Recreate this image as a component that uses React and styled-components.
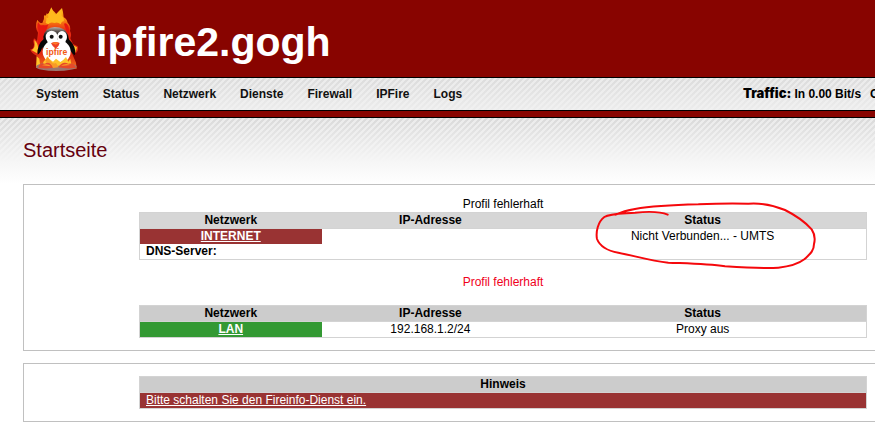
import styled, { createGlobalStyle } from "styled-components"

const GlobalStyle = createGlobalStyle`
    body { margin: 0; background: #fff; color: #000; font-family: "Liberation Sans", Arial, sans-serif; font-size: 12px; line-height: 15px; }
`

const Page = styled.div`overflow: hidden;`
const Header = styled.header`display: flex; align-items: flex-start; gap: 10px; height: 73px; padding: 4px 20px 0; background: #880400;`
const HostName = styled.h1`margin: 13px 0 0; color: #fff; font-size: 41px; line-height: 50px; font-weight: bold;`
const NavBar = styled.div`
    display: flex; align-items: center; justify-content: space-between;
    min-width: 960px; height: 32px; padding: 0 10px 0 36px;
    border-top: 1px solid #000; border-bottom: 1px solid #000;
    background:
        linear-gradient(to bottom, rgba(242,242,242,0), rgba(242,242,242,.75)),
        linear-gradient(135deg, #dcdcdc 25%, #ebebeb 25%, #ebebeb 50%, #dcdcdc 50%, #dcdcdc 75%, #ebebeb 75%) 0 0 / 6px 6px;
`
const Menu = styled.nav`display: flex; gap: 24px;`
const MenuLink = styled.a`color: #111; font-weight: bold; text-decoration: none;`
const Traffic = styled.div`display: flex; align-items: baseline; flex: none; width: 253px; font-weight: bold; white-space: nowrap;`
const TrafficLabel = styled.span`margin-right: 3px; font-family: Inter, sans-serif; font-size: 13px; font-weight: 900;`
const TrafficValue = styled.span`margin-right: 9px;`
const RedBar = styled.div`height: 6px; background: #880400; border-bottom: 1px solid #000;`

const Content = styled.main`
    min-width: 960px; padding: 0 23px;
    background:
        linear-gradient(to bottom, rgba(246,246,246,0), #f6f6f6 44px, #fff 66px),
        linear-gradient(135deg, #dadada 25%, #ebebeb 25%, #ebebeb 50%, #dadada 50%, #dadada 75%, #ebebeb 75%) 0 0 / 6px 6px;
`
const PageTitle = styled.h2`margin: 0; padding: 20px 0 22px; color: #66000f; font-size: 20px; line-height: 24px; font-weight: normal;`
const Panel = styled.section`margin-bottom: 12px; padding: 12px 115px; border: 1px solid #c0c0c0; background: #fff;`
const Message = styled.p`margin: 0; text-align: center;`
const ErrorMessage = styled(Message)`padding: 15px 0; color: #f0001c;`

const Table = styled.table`width: 100%; border: 1px solid #d3d3d3; border-spacing: 0; table-layout: fixed;`
const HeadCell = styled.th`width: ${(props) => props.$width}; height: 15px; padding: 0; border-bottom: 1px solid #d3d3d3; background: ${(props) => props.$bg || "#ccc"};`
const Cell = styled.td`position: relative; height: 15px; padding: 0; text-align: center;`
const ZoneCell = styled(Cell)`background: ${(props) => props.$color}; font-weight: bold;`
const DnsCell = styled.td`height: 15px; padding: 0 6px; font-weight: bold;`
const NoticeCell = styled.td`height: 15px; padding: 0 6px; background: #993333;`
const WhiteLink = styled.a`color: #fff; text-decoration: underline;`
const Marker = styled.svg`position: absolute; top: -28px; left: calc(50% - 109px); pointer-events: none;`

const menu = ["System", "Status", "Netzwerk", "Dienste", "Firewall", "IPFire", "Logs"]

const Logo = () => (
    <svg width="66" height="70" viewBox="0 0 198 210" aria-hidden="true">
        <defs>
            <linearGradient id="flame" x1="0" y1="0" x2="0" y2="1">
                <stop offset="0" stopColor="#ffc21a" />
                <stop offset=".2" stopColor="#f98a12" />
                <stop offset=".38" stopColor="#ea2b12" />
                <stop offset=".75" stopColor="#e02a12" />
                <stop offset="1" stopColor="#f0701c" />
            </linearGradient>
            <linearGradient id="head" x1="0" y1="0" x2="0" y2="1">
                <stop offset="0" stopColor="#b9b0ab" />
                <stop offset=".25" stopColor="#5a5350" />
                <stop offset=".5" stopColor="#090909" />
            </linearGradient>
        </defs>
        <path fill="url(#flame)" d="M52 192 L50 155 Q33 148 31 136 Q40 137 42 122 Q37 112 42 103 Q49 108 51 112 L54 86 Q43 68 52 47 Q58 58 67 57 Q74 46 72 34 Q79 38 80 28 Q85 35 90 19 L94 10 Q96 19 103 23 L109 30 Q116 22 126 12 Q130 24 131 40 Q139 43 143 56 Q153 65 150 81 Q156 91 151 103 L159 120 L173 127 Q177 139 168 147 L156 148 L168 176 L170 194 Z" />
        <path fill="#ffb91d" d="M77 57 Q80 48 79 40 Q87 46 84 33 L91 19 L95 12 Q97 24 107 32 L115 24 L125 15 L125 35 Q134 43 131 52 Q126 49 122 61 Q113 53 104 57 Q91 52 85 61Z" />
        <path fill="#e71810" d="M54 110 L57 82 Q49 69 54 53 Q60 67 69 63 Q80 66 86 59 Q75 85 73 106 L58 134Z M132 59 Q138 55 143 63 Q151 76 144 91 L137 75Z" />
        <path fill="#ffc229" d="M43 108 Q53 116 55 132 L51 148 L34 138 Q44 134 44 122Z M158 123 L171 130 L167 144 L154 143Z M50 157 L58 164 L61 188 L48 191Z" />
        <ellipse cx="109" cy="188" rx="61" ry="13" fill="#9b7770" />
        <path fill="#070707" d="M74 103 Q50 121 53 152 Q62 147 67 130 L74 158 L143 155 L148 134 Q157 151 165 153 Q171 129 145 104Z" />
        <path fill="url(#head)" d="M72 118 L70 98 Q76 70 104 69 Q135 69 144 92 L150 123Z" />
        <ellipse cx="110" cy="143" rx="42" ry="37" fill="#fff" />
        <ellipse cx="95" cy="99" rx="18" ry="19" fill="#fff" />
        <ellipse cx="126" cy="99" rx="15" ry="18" fill="#fff" />
        <circle cx="95" cy="98" r="6" fill="#111" />
        <circle cx="122" cy="98" r="6" fill="#111" />
        <path fill="#ef4024" d="M93 118 Q106 111 119 117 Q118 126 107 134 Q98 129 93 118Z" />
        <path fill="#ff7a24" d="M95 117 Q107 112 116 117 L107 122Z" />
        <path fill="#ffc229" d="M70 174 Q79 164 82 157 Q88 168 99 173 L108 164 L121 174 Q132 167 138 159 L145 173 L151 165 L154 183 L68 188Z" />
        <path fill="#e64929" d="M55 191 Q57 177 75 179 Q87 168 102 190 Q92 195 55 192Z M115 190 Q127 170 145 179 Q163 175 168 191 Q145 196 115 190Z" />
        <path fill="#f99a27" d="M66 184 Q83 176 93 187Z M123 186 Q136 176 151 183Z M77 169 L83 158 L91 170 Q99 182 108 177 L116 190 L99 192 Q92 174 77 175Z" />
        <text x="110" y="154" textAnchor="middle" fill="#f25a12" fontFamily="Liberation Sans, sans-serif" fontSize="26" fontWeight="bold">ipfire</text>
    </svg>
)

const StatusMarker = () => (
    <Marker width="224" height="70" viewBox="27 33 672 210" aria-hidden="true">
        <path
            d="M248 74 C225 64 180 65 150 68 C110 71 75 70 58 81 C39 95 32 125 36 147 C45 170 65 182 100 188 C150 198 200 213 250 218 C320 221 370 222 420 229 C480 233 540 237 580 233 C620 229 640 222 658 208 C675 192 687 183 687 162 C692 143 688 130 680 118 C655 90 630 75 600 60 C560 43 520 39 490 41 C430 39 380 41 340 43 C260 45 190 50 150 57 C120 62 105 68 92 74"
            fill="none" stroke="#f5080c" strokeWidth="6" strokeLinecap="round" strokeLinejoin="round"
        />
    </Marker>
)

const NetworkHead = ({ bg }) => (
    <thead>
        <tr>
            <HeadCell $width="25%" $bg={bg}>Netzwerk</HeadCell>
            <HeadCell $width="30%" $bg={bg}>IP-Adresse</HeadCell>
            <HeadCell $width="45%" $bg={bg}>Status</HeadCell>
        </tr>
    </thead>
)

const App = () => {
    return (
        <Page>
            <GlobalStyle />
            <Header>
                <Logo />
                <HostName>ipfire2.gogh</HostName>
            </Header>
            <NavBar>
                <Menu>
                    {menu.map((item) => (
                        <MenuLink key={item} href="#">{item}</MenuLink>
                    ))}
                </Menu>
                <Traffic>
                    <TrafficLabel>Traffic:</TrafficLabel>
                    <TrafficValue>In 0.00 Bit/s</TrafficValue>
                    <TrafficValue>Out 0.00 Bit/s</TrafficValue>
                </Traffic>
            </NavBar>
            <RedBar />
            <Content>
                <PageTitle>Startseite</PageTitle>
                <Panel>
                    <Message>Profil fehlerhaft</Message>
                    <Table>
                        <NetworkHead bg="#d6d6d6" />
                        <tbody>
                            <tr>
                                <ZoneCell $color="#993333"><WhiteLink href="#">INTERNET</WhiteLink></ZoneCell>
                                <Cell />
                                <Cell>Nicht Verbunden... - UMTS<StatusMarker /></Cell>
                            </tr>
                            <tr>
                                <DnsCell colSpan="3">DNS-Server:</DnsCell>
                            </tr>
                        </tbody>
                    </Table>
                    <ErrorMessage>Profil fehlerhaft</ErrorMessage>
                    <Table>
                        <NetworkHead />
                        <tbody>
                            <tr>
                                <ZoneCell $color="#339933"><WhiteLink href="#">LAN</WhiteLink></ZoneCell>
                                <Cell>192.168.1.2/24</Cell>
                                <Cell>Proxy aus</Cell>
                            </tr>
                        </tbody>
                    </Table>
                </Panel>
                <Panel>
                    <Table>
                        <thead>
                            <tr><HeadCell>Hinweis</HeadCell></tr>
                        </thead>
                        <tbody>
                            <tr>
                                <NoticeCell><WhiteLink href="#">Bitte schalten Sie den Fireinfo-Dienst ein.</WhiteLink></NoticeCell>
                            </tr>
                        </tbody>
                    </Table>
                </Panel>
            </Content>
        </Page>
    )
}

export default App
